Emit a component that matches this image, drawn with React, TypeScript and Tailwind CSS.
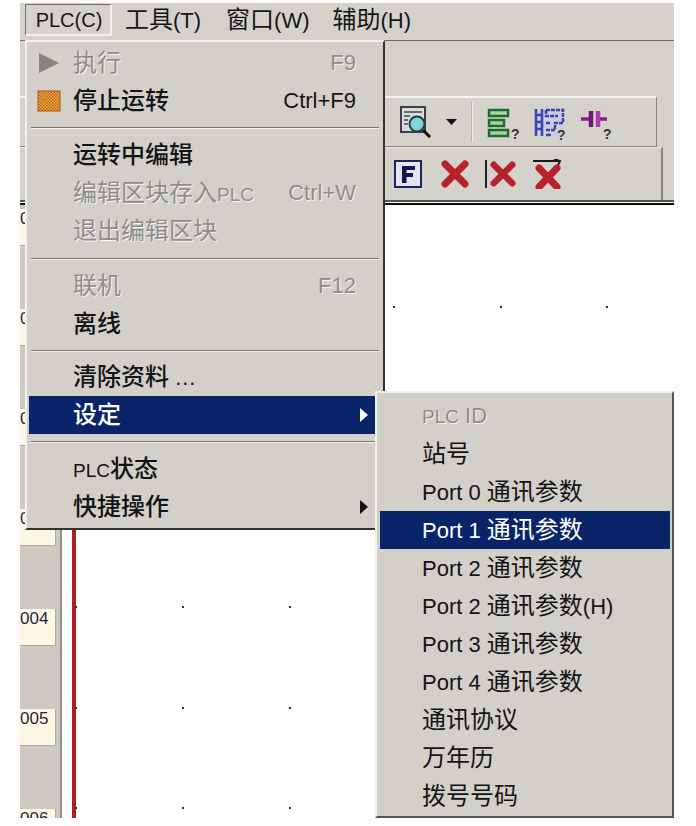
const MENU_FONT = "[font-family:'Liberation_Sans','Noto_Sans_CJK_SC',sans-serif]"

// CJK glyphs sit a bit larger than the latin text in this menu, PLC is narrower in the original too
function Label({ text, plain }: { text: string; plain?: boolean }) {
  const parts = text.split(/([\u4e00-\u9fff]+|PLC|\.\.\.)/).filter(Boolean)
  return (
    <span className="whitespace-pre">
      {parts.map((p, i) => {
        if (/[\u4e00-\u9fff]/.test(p)) return <span key={i} className={plain ? 'text-[24px]' : 'text-[24px] font-medium'}>{p}</span>
        if (p === 'PLC') return <span key={i} className="text-[19px]">{p}</span>
        if (p === '...') return <span key={i} className="tracking-[1px]">{p}</span>
        return <span key={i}>{p}</span>
      })}
    </span>
  )
}

interface ItemProps {
  text: string
  shortcut?: string
  disabled?: boolean
  active?: boolean
  arrow?: boolean
  sub?: boolean
  icon?: React.ReactNode
}

function MenuItem({ text, shortcut, disabled, active, arrow, sub, icon }: ItemProps) {
  let tone = 'text-[#141414]'
  if (disabled) tone = 'text-[#8e8d88] [text-shadow:1px_1px_0_#f6f5f2]'
  if (active) tone = 'text-white bg-[#0a246a]'
  return (
    <div className={`relative h-[38px] flex items-center text-[22px] leading-none pr-[25px] ${sub ? 'pl-[42px]' : 'pl-[44px]'} ${tone}`}>
      {icon && <span className="absolute left-[7px] top-[7px] w-[26px] h-[24px] flex items-center justify-center">{icon}</span>}
      <Label text={text} plain={disabled || sub} />
      {shortcut && <span className="ml-auto">{shortcut}</span>}
      {arrow && (
        <svg width="8" height="14" viewBox="0 0 8 14" className="absolute right-[13px] top-[12px]">
          <path d="M0 0 L8 7 L0 14 Z" fill={active ? '#fff' : '#111'} />
        </svg>
      )}
    </div>
  )
}

function Sep({ h }: { h: string }) {
  return (
    <div className={`${h} flex items-center`}>
      <div className="w-full mx-[2px] h-[2px] border-t border-[#77756f] bg-[#f4f3f0]" />
    </div>
  )
}

function PlayIcon() {
  return (
    <svg width="22" height="22" viewBox="0 0 22 22">
      <path d="M1 1 L21 11 L1 21 Z" fill="#85857f" />
    </svg>
  )
}

function StopIcon() {
  return (
    <svg width="24" height="22" viewBox="0 0 24 22">
      <defs>
        <pattern id="hatch" width="3" height="3" patternUnits="userSpaceOnUse">
          <rect width="3" height="3" fill="#f5b04a" />
          <rect width="1.5" height="1.5" fill="#b8620f" />
          <rect x="1.5" y="1.5" width="1.5" height="1.5" fill="#b8620f" />
        </pattern>
      </defs>
      <rect x="1" y="1" width="22" height="20" fill="url(#hatch)" stroke="#a8560f" />
    </svg>
  )
}

function Magnifier() {
  return (
    <svg width="32" height="32" viewBox="0 0 32 32">
      <rect x="1" y="1" width="24" height="25" fill="#dcdcd8" stroke="#3b3f48" strokeWidth="2" />
      <path d="M4 6H22M4 10H10M4 14H8M4 18H8" stroke="#44484f" strokeWidth="1.5" />
      <circle cx="17" cy="18" r="7.5" fill="#7fd6d8" stroke="#2b3a40" strokeWidth="2" />
      <path d="M23 24 L30 31" stroke="#111" strokeWidth="3" />
    </svg>
  )
}

function Help({ x, y }: { x: number; y: number }) {
  return <text x={x} y={y} fontSize="14" fontWeight="700" fill="#33343a" fontFamily="Liberation Sans">?</text>
}

function GreenHelp() {
  return (
    <svg width="32" height="32" viewBox="0 0 32 32" className="overflow-visible">
      <g fill="#a9d59a" stroke="#1f6a30" strokeWidth="2.500">
        <rect x="1" y="4" width="19" height="6" />
        <rect x="1" y="14" width="15" height="6" />
        <rect x="1" y="24" width="19" height="6" />
      </g>
      <Help x={23} y={33} />
    </svg>
  )
}

function BlueHelp() {
  return (
    <svg width="32" height="32" viewBox="0 0 32 32" className="overflow-visible">
      <rect x="2" y="4" width="27" height="26" fill="#c6c8e4" opacity="0.6" />
      <g stroke="#3646b0" strokeWidth="2.500" fill="none">
        <path d="M2 3V30M8 3V30M2 9H8M2 16H8M2 23H8" />
        <path d="M12 4H29V17H21V24H12M12 4V10H24M12 17H17" strokeDasharray="4 1" />
        <path d="M12 29H17" />
      </g>
      <Help x={23} y={34} />
    </svg>
  )
}

function PurpleHelp() {
  return (
    <svg width="32" height="32" viewBox="0 0 32 32" className="overflow-visible">
      <path d="M0 13H9M18 13H26" stroke="#8a1f8c" strokeWidth="3.500" />
      <path d="M10 5V21" stroke="#6f1872" strokeWidth="4.500" />
      <path d="M17 5V21" stroke="#a63fa8" strokeWidth="4.500" />
      <Help x={22} y={33} />
    </svg>
  )
}

function RedX({ size = 28 }: { size?: number }) {
  return (
    <svg width={size} height={size} viewBox="0 0 28 28">
      <path d="M4 4 L24 24 M24 4 L4 24" stroke="#b8232b" strokeWidth="7" strokeLinecap="round" />
    </svg>
  )
}

function Tag({ n }: { n: string }) {
  return (
    <div className="h-[37px] w-[36px] shrink-0 bg-[#fdf8e6] border-r border-b border-[#b9a98a] rounded-br-[2px] text-[17px] leading-[19px] text-[#2a1f3a] overflow-hidden">
      {n}
    </div>
  )
}

const DOT_X = [13, 120, 227, 331, 438, 544]
const DOT_Y = [101, 201, 301, 401, 502, 602]

const MAIN_TOP = [
  { text: '执行', shortcut: 'F9', disabled: true, icon: <PlayIcon /> },
  { text: '停止运转', shortcut: 'Ctrl+F9', icon: <StopIcon /> },
]

const SUB_ITEMS = [
  { text: 'PLC ID', disabled: true },
  { text: '站号' },
  { text: 'Port 0 通讯参数' },
  { text: 'Port 1 通讯参数', active: true },
  { text: 'Port 2 通讯参数' },
  { text: 'Port 2 通讯参数(H)' },
  { text: 'Port 3 通讯参数' },
  { text: 'Port 4 通讯参数' },
  { text: '通讯协议' },
  { text: '万年历' },
  { text: '拨号号码' },
]

export default function App() {
  return (
    <div className={`relative w-[696px] h-[826px] overflow-hidden bg-[#fdfdfd] pl-[20px] pr-[22px] pt-[3px] ${MENU_FONT}`}>
      {/* Window */}
      <div className="flex flex-col h-[815px] bg-white">
        {/* Menu bar */}
        <div className="h-[37px] shrink-0 flex items-center pb-[3px] bg-[#d5d2cc] text-[22px] leading-none text-[#161616]">
          <div className="ml-[5px] w-[87px] h-[32px] flex items-center justify-center pl-[2px] text-[20px] border-t border-l border-[#74736e] border-r-2 border-b-2 border-r-[#f0efec] border-b-[#f0efec]">PLC(C)</div>
          <div className="ml-[13px]"><Label text="工具(T)" plain /></div>
          <div className="ml-[25px]"><Label text="窗口(W)" plain /></div>
          <div className="ml-[23px]"><Label text="辅助(H)" plain /></div>
        </div>

        {/* Toolbars */}
        <div className="h-[160px] shrink-0 flex flex-col bg-[#d5d2cc] border-t border-[#6f6e69] pt-[55px]">
          <div className="h-[51px] w-[637px] shrink-0 border-t-2 border-[#f4f3f0] border-r border-r-[#85847f] border-b border-b-[#85847f] flex items-center pl-[380px]">
            <Magnifier />
            <svg width="11" height="6" viewBox="0 0 11 6" className="ml-[14px]"><path d="M0 0H11L5.500 6Z" fill="#111" /></svg>
            <div className="ml-[14px] h-[40px] w-[2px] bg-[#b5b3ad] border-r border-[#eeede9]" />
            <div className="ml-[15px]"><GreenHelp /></div>
            <div className="ml-[14px]"><BlueHelp /></div>
            <div className="ml-[15px]"><PurpleHelp /></div>
          </div>
          <div className="h-[53px] w-[643px] shrink-0 border-t border-[#e9e8e4] border-r-2 border-r-[#85847f] flex items-center pl-[374px]">
            <svg width="28" height="28" viewBox="0 0 28 28">
              <rect x="1" y="1" width="26" height="26" fill="#e4e4ee" stroke="#20205e" strokeWidth="2" />
              <path d="M8 6H21V10H12.500V13H19V17H12.500V23H8Z" fill="#15154f" />
            </svg>
            <div className="ml-[19px]"><RedX /></div>
            <div className="ml-[16px] w-[2px] h-[28px] bg-[#22222a]" />
            <div className="ml-[3px]"><RedX size={26} /></div>
            <svg width="30" height="30" viewBox="0 0 30 30" className="ml-[17px]">
              <path d="M0 2H27M21 0 L27 2 L24 8" stroke="#1a1a1a" strokeWidth="2" fill="none" />
              <path d="M6 9 L24 28 M24 9 L6 28" stroke="#b8232b" strokeWidth="7" strokeLinecap="round" />
            </svg>
          </div>
        </div>

        {/* Ladder canvas header line */}
        <div className="h-[5px] shrink-0 bg-white border-t-2 border-b-2 border-t-[#55544f] border-b-[#111]" />

        {/* Ladder canvas */}
        <div className="flex-1 min-h-0 flex overflow-hidden">
          <div className="w-[42px] shrink-0 bg-[#cdcac4] border-r-2 border-[#8e8e8c] flex flex-col gap-[63px] pt-[4px]">
            {['000', '001', '002', '003', '004', '005', '006'].map(n => <Tag key={n} n={n} />)}
          </div>
          <div className="relative flex-1">
            <div className="absolute left-[10px] top-0 bottom-0 w-[4px] bg-[#ad1e26]" />
            {DOT_Y.map(y => DOT_X.map(x => (
              <span key={`${x}-${y}`} className="absolute w-[2px] h-[2px] bg-[#33333a]" style={{ left: x, top: y }} />
            )))}
          </div>
        </div>
      </div>

      {/* PLC menu */}
      <div className="absolute left-[25px] top-[40px] w-[360px] h-[490px] bg-[#d3d0ca] border-t-2 border-l-2 border-[#f2f1ee] border-r-2 border-r-[#33322f] border-b-2 border-b-[#33322f] pt-[2px] px-[2px]">
        {MAIN_TOP.map(item => <MenuItem key={item.text} {...item} />)}
        <Sep h="h-[16px]" />
        <MenuItem text="运转中编辑" />
        <MenuItem text="编辑区块存入PLC" shortcut="Ctrl+W" disabled />
        <MenuItem text="退出编辑区块" disabled />
        <Sep h="h-[17px]" />
        <MenuItem text="联机" shortcut="F12" disabled />
        <MenuItem text="离线" />
        <Sep h="h-[15px]" />
        <MenuItem text="清除资料 ..." />
        <MenuItem text="设定" active arrow />
        <Sep h="h-[16px]" />
        <MenuItem text="PLC状态" />
        <MenuItem text="快捷操作" arrow />
      </div>

      {/* Settings submenu */}
      <div className="absolute left-[375px] top-[391px] w-[299px] h-[427px] bg-[#d3d0ca] border-t-2 border-l-2 border-[#f2f1ee] border-r-2 border-r-[#55544f] border-b-2 border-b-[#55544f] pt-[4px] pl-[3px] pr-[2px]">
        {SUB_ITEMS.map(item => <MenuItem key={item.text} {...item} sub />)}
      </div>
    </div>
  )
}
